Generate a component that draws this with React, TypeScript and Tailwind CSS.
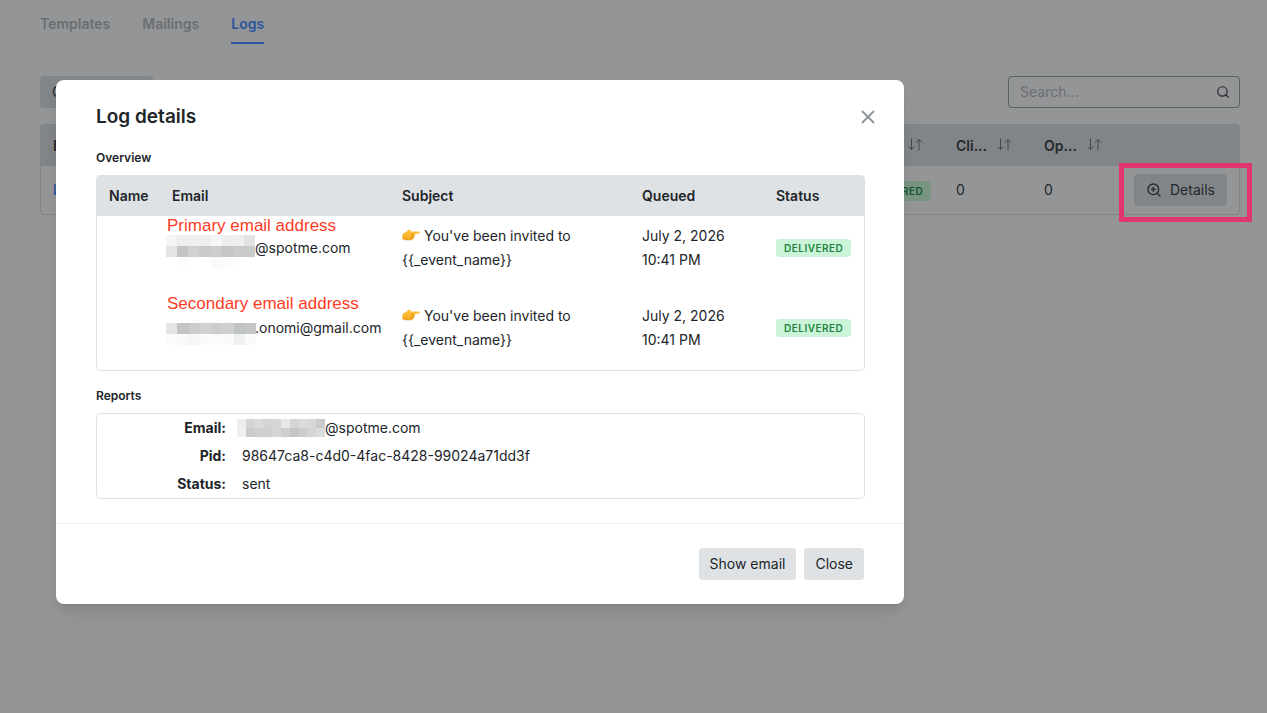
import { Search, X, ZoomIn } from "lucide-react";

type MosaicProps = { cells: string[][]; className: string };

function Mosaic({ cells, className }: MosaicProps) {
  return (
    <svg
      viewBox={`0 0 ${cells[0].length} ${cells.length}`}
      preserveAspectRatio="none"
      shapeRendering="crispEdges"
      className={className}
      aria-hidden="true"
    >
      {cells.map((row, y) =>
        row.map((fill, x) => <rect key={`${x}-${y}`} x={x} y={y} width={1} height={1} fill={fill} />),
      )}
    </svg>
  );
}

const primaryMask = [
  ["#f5f5f6", "#eeefef", "#eeefef", "#efeff0", "#f6f7f7", "#ededee", "#eeefef", "#e2e3e3"],
  ["#e4e4e5", "#c4c6c6", "#d0d2d2", "#c9cbcb", "#cbcdcd", "#c4c6c6", "#c9cbcb", "#cacccc"],
  ["#ffffff", "#fdfdfd", "#ffffff", "#ffffff", "#fafafa", "#fbfbfb", "#ffffff", "#ffffff"],
];
const secondaryMask = [
  ["#e5e5e6", "#c3c5c5", "#cbcdcd", "#d0d2d2", "#cbcdcd", "#cfd0d2", "#c1c4c4", "#c5c7c7"],
  ["#fafbfb", "#f8f9f9", "#f5f6f6", "#f9fafa", "#fafbfb", "#f9fafa", "#eff0f0", "#f9fafa"],
];
const reportMask = [
  ["#ebecec", "#d2d4d5", "#d9dbdc", "#d2d4d5", "#d3d5d6", "#e7e8e8", "#d3d5d6", "#d8dadb", "#d5d7d8", "#c8cacb"],
  ["#f0f0f0", "#c9cbcc", "#cdcfd0", "#cdcfd0", "#d4d6d7", "#cdcfd0", "#c3c5c6", "#cacccd", "#d2d4d5", "#dadbdb"],
];

const logs = [
  {
    note: "Primary email address",
    email: "@spotme.com",
    mask: primaryMask,
    noteClass: "top-0",
    maskClass: "top-[19px] h-[33px] w-[89px]",
    pad: "pt-2 pb-6",
  },
  {
    note: "Secondary email address",
    email: ".onomi@gmail.com",
    mask: secondaryMask,
    noteClass: "-top-0.5",
    maskClass: "top-[27px] h-[22px] w-[90px]",
    pad: "pt-2 pb-[18px]",
  },
];

function SortIcon() {
  return (
    <svg
      width="15"
      height="13"
      viewBox="0 0 15 13"
      fill="none"
      stroke="#45494c"
      strokeWidth="1"
      strokeLinecap="round"
      strokeLinejoin="round"
      className="mb-1 ml-2.5 inline-block align-middle"
      aria-hidden="true"
    >
      <path d="M3.500 1v10.500M.8 8.800l2.700 2.700 2.700-2.700M11 12V1.500M8 4.500l3-3 3 3" />
    </svg>
  );
}

function Pointing() {
  return (
    <svg width="18" height="12" viewBox="0 0 18 12" className="mr-1 inline-block align-baseline" role="img" aria-label="Pointing right">
      <defs>
        <linearGradient id="hand" x1="0" y1="0" x2="0" y2="1">
          <stop offset="0" stopColor="#ffc83d" />
          <stop offset="1" stopColor="#f6a623" />
        </linearGradient>
      </defs>
      <path
        d="M.3 5.200 4.800 2.300C5.800 1 7 .6 8 .7c1 .1 1.300 1 .5 1.500L7.800 2.600h9c1.300 0 1.300 1.800 0 1.900L12.800 5c.6.8.3 1.500-.3 1.800.3.8 0 1.500-.7 1.700.1.9-.4 1.500-1.200 1.600-.3.7-.9.9-1.500.9H4.500c-1.500.1-2.500-.4-4.200-.4Z"
        fill="url(#hand)"
      />
      <path d="M9 5.200h3.600M8.800 7h3.600M8.500 8.700h3.200M2 10.500c2 .6 6 .5 8 .2" stroke="#e08a1a" strokeWidth=".6" fill="none" />
    </svg>
  );
}

const tab = "border-b-2 pb-2 text-sm leading-5 font-semibold";
const button = "h-8 rounded bg-[#dee2e5] px-[11px] text-sm text-[#212529]";

export default function App() {
  return (
    <div className="relative min-h-screen bg-[#949597] pr-[27px] pl-10 text-sm text-[#25282b] font-['Inter','Liberation_Sans',sans-serif]">
      <nav className="flex gap-8 pt-3.5">
        <a href="#templates" className={`${tab} border-transparent text-[#6a6f72]`}>Templates</a>
        <a href="#mailings" className={`${tab} border-transparent text-[#6a6f72]`}>Mailings</a>
        <a href="#logs" className={`${tab} border-[#2b549c] text-[#2b549c]`}>Logs</a>
      </nav>

      <div className="mt-8 flex items-start justify-between">
        <button type="button" className="h-8 w-[113px] rounded bg-[#828587] px-3 text-left">Columns</button>
        <div className="flex h-8 w-[232px] items-center rounded border border-[#5b6063] px-[11px]">
          <input type="search" aria-label="Search" placeholder="Search..." className="min-w-0 flex-1 bg-transparent outline-none placeholder:text-[#6a6e71]" />
          <Search size={14} className="-mr-0.5 text-[#25282b]" />
        </div>
      </div>

      <div className="mt-4 rounded border border-[#828587]">
        <table className="w-full table-fixed text-left">
          <thead className="h-[41px] bg-[#828587]">
            <tr>
              <th className="pl-3 font-semibold">Blast</th>
              <th className="w-[128px] font-semibold">Status<span className="ml-[27px]"><SortIcon /></span></th>
              <th className="w-[88px] font-semibold">Cli...<SortIcon /></th>
              <th className="w-[90px] font-semibold">Op...<SortIcon /></th>
              <th className="w-[105px]" aria-label="Actions" />
            </tr>
          </thead>
          <tbody>
            <tr className="h-12">
              <td className="pl-3"><a href="#blast" className="font-medium text-[#2b549c]">blast</a></td>
              <td className="pl-7"><span className="rounded bg-[#7a9482] px-2 py-1 text-[10px] font-semibold tracking-wider text-[#14562d]">DELIVERED</span></td>
              <td>0</td>
              <td>0</td>
              <td>
                <div className="relative w-[93px]">
                  <button type="button" className="flex h-8 w-full items-center gap-2 rounded bg-[#828587] px-3">
                    <ZoomIn size={16} /> Details
                  </button>
                  <span className="pointer-events-none absolute -top-[11px] -right-[25px] -bottom-4 -left-[15px] border-5 border-[#e0366f]" />
                </div>
              </td>
            </tr>
          </tbody>
        </table>
      </div>

      <section role="dialog" aria-labelledby="dialog-title" className="absolute top-20 left-14 w-[848px] max-w-full rounded-lg bg-white text-[#212529] shadow-lg">
        <div className="py-6 pr-[39px] pl-10">
          <header className="flex h-[26px] items-center justify-between">
            <h1 id="dialog-title" className="text-[19px] leading-6 font-semibold">Log details</h1>
            <button type="button" aria-label="Close dialog" className="-mr-3.5 text-[#8c969e]"><X size={22} /></button>
          </header>

          <h2 className="mt-5 text-xs leading-4 font-semibold">Overview</h2>
          <div className="mt-[9px] overflow-hidden rounded border border-[#dee2e5]">
            <table className="w-full table-fixed text-left">
              <thead className="h-10 bg-[#dee2e5]">
                <tr>
                  <th className="w-[63px] pl-3 font-semibold">Name</th>
                  <th className="w-[230px] pl-3 font-semibold">Email</th>
                  <th className="w-[240px] pl-3 font-semibold">Subject</th>
                  <th className="w-[134px] pl-3 font-semibold">Queued</th>
                  <th className="pl-3 font-semibold">Status</th>
                </tr>
              </thead>
              <tbody className="leading-6">
                {logs.map((log) => (
                  <tr key={log.note}>
                    <td />
                    <td className={`relative pl-[95px] ${log.pad}`}>
                      <Mosaic cells={log.mask} className={`absolute left-1.5 ${log.maskClass}`} />
                      <span className={`absolute left-[7px] font-['Liberation_Sans',sans-serif] text-[17px] leading-5 whitespace-nowrap text-[#ff3b1f] ${log.noteClass}`}>
                        {log.note}
                      </span>
                      {log.email}
                    </td>
                    <td className={`pl-3 ${log.pad}`}><Pointing />You've been invited to<br />{"{{_event_name}}"}</td>
                    <td className={`pl-3 ${log.pad}`}>July 2, 2026<br />10:41 PM</td>
                    <td className={`pl-3 ${log.pad}`}>
                      <span className="block w-fit rounded bg-[#caf3d8] px-2 text-[10px] leading-[18px] font-semibold tracking-wider text-[#218342]">DELIVERED</span>
                    </td>
                  </tr>
                ))}
              </tbody>
            </table>
          </div>

          <h2 className="mt-[17px] text-xs leading-4 font-semibold">Reports</h2>
          <dl className="mt-[9px] grid grid-cols-[129px_1fr] gap-x-4 rounded border border-[#dee2e5] leading-7">
            <dt className="text-right font-bold">Email:</dt>
            <dd className="flex items-center"><Mosaic cells={reportMask} className="-ml-[5px] h-[18px] w-[88px]" />@spotme.com</dd>
            <dt className="text-right font-bold">Pid:</dt>
            <dd>98647ca8-c4d0-4fac-8428-99024a71dd3f</dd>
            <dt className="text-right font-bold">Status:</dt>
            <dd>sent</dd>
          </dl>
        </div>
        <footer className="flex justify-end gap-2 border-t border-[#eef0f1] px-10 py-6">
          <button type="button" className={button}>Show email</button>
          <button type="button" className={button}>Close</button>
        </footer>
      </section>
    </div>
  );
}
